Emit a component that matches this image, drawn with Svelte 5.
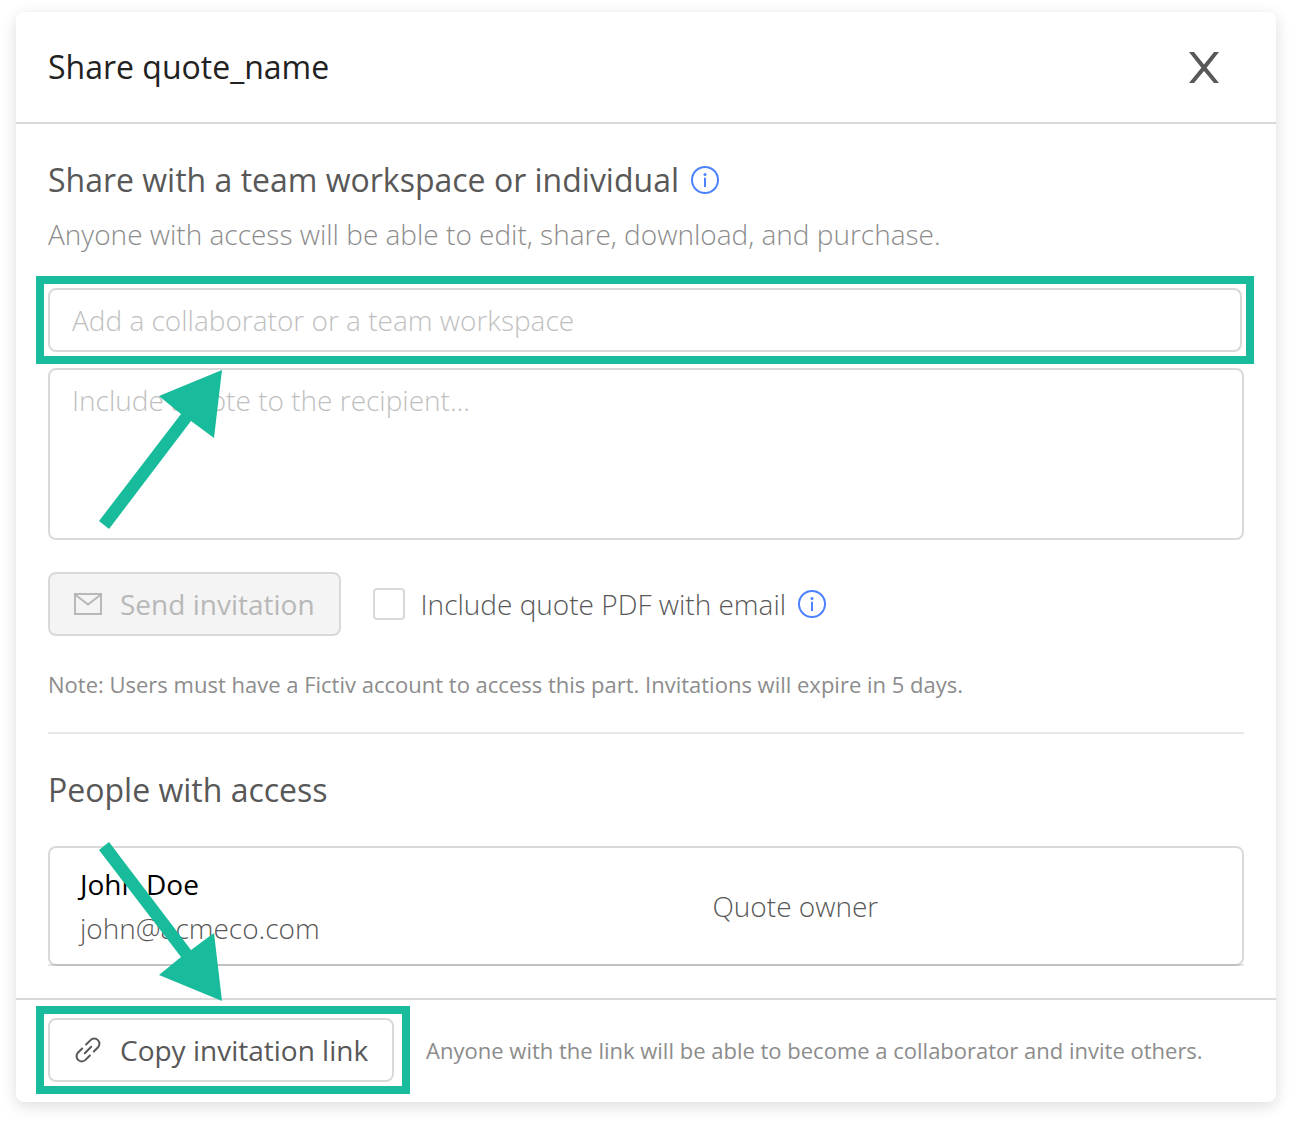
<script>
	let collaborator = $state('');
	let note = $state('');
	let includePdf = $state(false);
	let open = $state(true);

	const people = [
		{ name: 'John Doe', email: 'john@acmeco.com', role: 'Quote owner' }
	];

	const inviteLink = '/invite';

	function copyLink() {
		navigator.clipboard?.writeText(inviteLink);
	}
</script>

{#snippet infoIcon()}
	<svg class="info" viewBox="0 0 28 28" aria-hidden="true">
		<circle cx="14" cy="14" r="13" fill="none" stroke="currentColor" stroke-width="2" />
		<circle cx="14" cy="8.6" r="1.5" fill="currentColor" />
		<path d="M14 11.8V21" stroke="currentColor" stroke-width="2" />
	</svg>
{/snippet}

{#if open}
<div class="modal" role="dialog" aria-labelledby="share-title">
	<header>
		<h1 id="share-title">Share quote_name</h1>
		<button class="close" type="button" aria-label="Close" onclick={() => (open = false)}>
			<svg viewBox="0 0 32 32" aria-hidden="true">
				<path d="M1 1H6L16 13.6L26 1H31L18.6 16.8L31 32H26L16 20L6 32H1L13.4 16.8Z" fill="currentColor" />
			</svg>
		</button>
	</header>

	<main>
		<h2>Share with a team workspace or individual {@render infoIcon()}</h2>
		<p class="desc">Anyone with access will be able to edit, share, download, and purchase.</p>

		<form onsubmit={(e) => e.preventDefault()}>
			<div class="highlight field">
				<input type="text" bind:value={collaborator} aria-label="Collaborator" placeholder="Add a collaborator or a team workspace" />
			</div>
			<div class="note-box">
				<textarea bind:value={note} aria-label="Note" placeholder="Include a note to the recipient..."></textarea>
				<svg class="arrow up" viewBox="0 0 124 160" aria-hidden="true">
					<path d="M123 0L115 68L92 51L10 159L0 151L82 44L60 26Z" />
				</svg>
			</div>
			<div class="actions">
				<button class="btn" type="submit" disabled={!collaborator}>
					<svg viewBox="0 0 28 28" aria-hidden="true">
						<path d="M1 4H27V24H1Z M1 4.5L14 14.5L27 4.5" fill="none" stroke="currentColor" stroke-width="2" />
					</svg>
					Send invitation
				</button>
				<label>
					<input type="checkbox" bind:checked={includePdf} />
					Include quote PDF with email
				</label>
				{@render infoIcon()}
			</div>
		</form>
		<p class="small">Note: Users must have a Fictiv account to access this part. Invitations will expire in 5 days.</p>

		<hr />

		<h2>People with access</h2>
		<div class="people-box">
			<ul>
				{#each people as p (p.email)}
					<li>
						<div>
							<p class="name">{p.name}</p>
							<p>{p.email}</p>
						</div>
						<p>{p.role}</p>
					</li>
				{/each}
			</ul>
			<svg class="arrow down" viewBox="0 0 124 160" aria-hidden="true">
				<path d="M123 159L115 91L92 108L10 0L0 8L82 115L60 133Z" />
			</svg>
		</div>
	</main>

	<footer>
		<div class="highlight copy">
			<button class="btn" type="button" onclick={copyLink}>
				<svg viewBox="0 0 28 28" aria-hidden="true">
					<g fill="none" stroke="currentColor" stroke-width="2" stroke-linecap="round" transform="rotate(-45 14 14)">
						<path d="M11 8.8H5.2A5.2 5.2 0 0 0 5.2 19.2H11.5" />
						<path d="M17 19.2H22.8A5.2 5.2 0 0 0 22.8 8.8H16.5" />
						<path d="M9.5 14H18.5" />
					</g>
				</svg>
				Copy invitation link
			</button>
		</div>
		<p class="small">Anyone with the link will be able to become a collaborator and invite others.</p>
	</footer>
</div>
{/if}

<style>
	:global(body) {
		background: #fff;
	}
	.modal {
		margin: 12px 16px 20px;
		border-radius: 8px;
		background: #fff;
		box-shadow: 0 4px 16px rgba(0, 0, 0, 0.14);
		font-family: 'Open Sans', sans-serif;
		font-size: 28px;
		line-height: 44px;
		font-weight: 340;
		color: #585858;
	}
	h1, h2, p, ul {
		margin: 0;
		padding: 0;
	}
	h1, h2 {
		font-size: 32px;
		line-height: 48px;
		font-weight: 440;
	}
	h1 {
		color: #222;
	}
	header {
		display: flex;
		align-items: center;
		justify-content: space-between;
		padding: 31px 56px 31px 32px;
		border-bottom: 2px solid #d9d9d9;
	}
	.close {
		display: flex;
		padding: 0;
		border: 0;
		background: none;
		color: #585858;
	}
	.close svg {
		width: 32px;
		height: 32px;
	}
	main {
		padding: 32px;
	}
	h2 {
		display: flex;
		align-items: center;
		gap: 12px;
	}
	.info {
		width: 28px;
		height: 28px;
		color: #4d82ff;
	}
	.desc {
		margin: 8px 0 32px;
		color: #8c8c8c;
	}
	.highlight {
		border: 8px solid #18bc9c;
		padding: 4px;
	}
	.field {
		margin: -12px -10px 4px -12px;
	}
	input, textarea, button {
		font: inherit;
		color: inherit;
	}
	input[type='text'], textarea {
		display: block;
		box-sizing: border-box;
		width: 100%;
		height: 64px;
		padding: 8px 22px;
		border: 2px solid #d9d9d9;
		border-radius: 8px;
		background: #fff;
	}
	textarea {
		height: 172px;
		resize: none;
	}
	::placeholder {
		color: #bfbfbf;
		opacity: 1;
	}
	.note-box, .people-box {
		position: relative;
	}
	.arrow {
		position: absolute;
		left: 51px;
		width: 124px;
		height: 160px;
		fill: #18bc9c;
		pointer-events: none;
	}
	.up {
		top: 2px;
	}
	.down {
		top: -4px;
	}
	.actions {
		display: flex;
		align-items: center;
		margin: 32px 0;
	}
	.btn {
		display: flex;
		align-items: center;
		gap: 18px;
		box-sizing: border-box;
		height: 64px;
		padding: 0 24px;
		border: 2px solid #d9d9d9;
		border-radius: 8px;
		background: #fff;
		font-weight: 400;
	}
	.btn:disabled {
		background: #f4f4f4;
		color: #b8b8b8;
	}
	.btn svg {
		width: 28px;
		height: 28px;
	}
	label {
		display: flex;
		align-items: center;
		gap: 16px;
		margin: 0 12px 0 32px;
	}
	input[type='checkbox'] {
		appearance: none;
		width: 32px;
		height: 32px;
		margin: 0;
		border: 2px solid #d9d9d9;
		border-radius: 4px;
	}
	.small {
		font-size: 22px;
		line-height: 32px;
		font-weight: 400;
		color: #8c8c8c;
	}
	hr {
		margin: 32px 0;
		border: 0;
		border-top: 2px solid #e8e8e8;
	}
	.people-box {
		margin-top: 32px;
	}
	ul {
		list-style: none;
		border: 2px solid #d9d9d9;
		border-radius: 8px;
	}
	.people-box::after {
		content: '';
		position: absolute;
		left: 0;
		right: 0;
		bottom: 0;
		height: 2px;
		background: rgba(0, 0, 0, 0.1);
	}
	.down {
		z-index: 1;
	}
	li {
		display: grid;
		grid-template-columns: 5fr 4fr;
		gap: 8px;
		align-items: center;
		padding: 14px 30px;
	}
	.name {
		font-weight: 500;
		color: #000;
	}
	footer {
		display: flex;
		align-items: center;
		gap: 16px;
		padding: 6px 20px 8px;
		border-top: 2px solid #d9d9d9;
	}
	.copy {
		padding-right: 8px;
	}
</style>
